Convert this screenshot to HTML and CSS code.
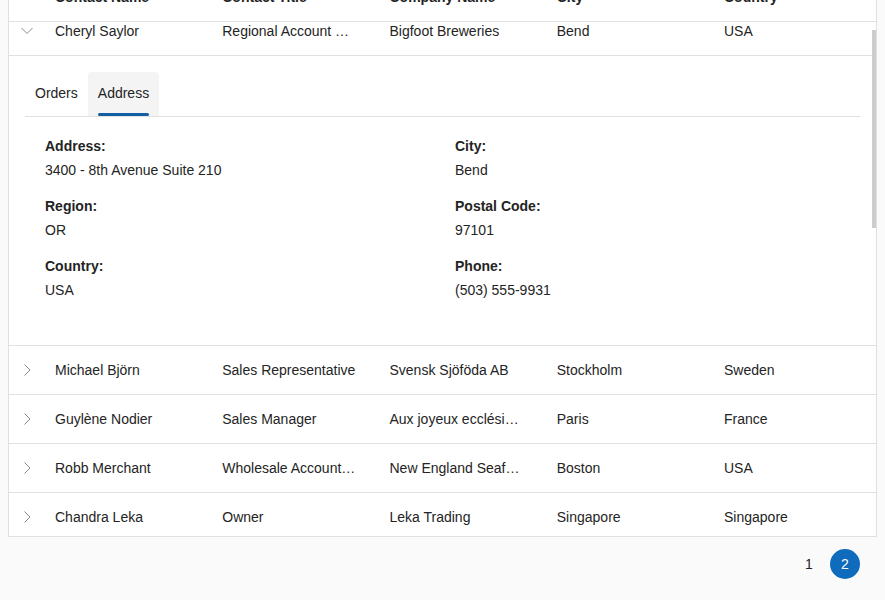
FILE: index.html
```html
<!DOCTYPE html>
<html>
<head>
<meta charset="utf-8">
<link rel="stylesheet" href="styles.css">
</head>
<body>
<div class="grid">
  <div class="header">
    <div class="row head-row">
      <div class="cell expand"></div>
      <div class="cell">Contact Name</div>
      <div class="cell">Contact Title</div>
      <div class="cell">Company Name</div>
      <div class="cell">City</div>
      <div class="cell">Country</div>
    </div>
  </div>
  <div class="body">
    <div class="scroll">
      <div class="row">
        <div class="cell expand"><svg width="12" height="12" viewBox="0 0 12 12"><polyline points="0.5,3 6,8.5 11.5,3" fill="none" stroke="#8a8a8a" stroke-width="1"/></svg></div>
        <div class="cell">Cheryl Saylor</div>
        <div class="cell">Regional Account Representative</div>
        <div class="cell">Bigfoot Breweries</div>
        <div class="cell">Bend</div>
        <div class="cell">USA</div>
      </div>
      <div class="detail">
        <div class="tabs">
          <div class="tab">Orders</div>
          <div class="tab active">Address</div>
        </div>
        <div class="panel">
          <div class="field"><div class="label">Address:</div><div class="value">3400 - 8th Avenue Suite 210</div></div>
          <div class="field"><div class="label">City:</div><div class="value">Bend</div></div>
          <div class="field"><div class="label">Region:</div><div class="value">OR</div></div>
          <div class="field"><div class="label">Postal Code:</div><div class="value">97101</div></div>
          <div class="field"><div class="label">Country:</div><div class="value">USA</div></div>
          <div class="field"><div class="label">Phone:</div><div class="value">(503) 555-9931</div></div>
        </div>
      </div>
      <div class="row">
        <div class="cell expand"><svg width="12" height="12" viewBox="0 0 12 12"><polyline points="3.5,0.5 9,6 3.5,11.5" fill="none" stroke="#8a8a8a" stroke-width="1"/></svg></div>
        <div class="cell">Michael Björn</div>
        <div class="cell">Sales Representative</div>
        <div class="cell">Svensk Sjöföda AB</div>
        <div class="cell">Stockholm</div>
        <div class="cell">Sweden</div>
      </div>
      <div class="row">
        <div class="cell expand"><svg width="12" height="12" viewBox="0 0 12 12"><polyline points="3.5,0.5 9,6 3.5,11.5" fill="none" stroke="#8a8a8a" stroke-width="1"/></svg></div>
        <div class="cell">Guylène Nodier</div>
        <div class="cell">Sales Manager</div>
        <div class="cell">Aux joyeux ecclésiastiques</div>
        <div class="cell">Paris</div>
        <div class="cell">France</div>
      </div>
      <div class="row">
        <div class="cell expand"><svg width="12" height="12" viewBox="0 0 12 12"><polyline points="3.5,0.5 9,6 3.5,11.5" fill="none" stroke="#8a8a8a" stroke-width="1"/></svg></div>
        <div class="cell">Robb Merchant</div>
        <div class="cell">Wholesale Account Agent</div>
        <div class="cell">New England Seafood Cannery</div>
        <div class="cell">Boston</div>
        <div class="cell">USA</div>
      </div>
      <div class="row">
        <div class="cell expand"><svg width="12" height="12" viewBox="0 0 12 12"><polyline points="3.5,0.5 9,6 3.5,11.5" fill="none" stroke="#8a8a8a" stroke-width="1"/></svg></div>
        <div class="cell">Chandra Leka</div>
        <div class="cell">Owner</div>
        <div class="cell">Leka Trading</div>
        <div class="cell">Singapore</div>
        <div class="cell">Singapore</div>
      </div>
    </div>
    <div class="thumb"></div>
  </div>
</div>
<div class="pager">
  <div class="page">1</div>
  <div class="page current">2</div>
</div>
</body>
</html>
```

FILE: styles.css
```css
html, body {
  margin: 0;
  padding: 0;
}
body {
  background: #fafafa;
  font-family: "Liberation Sans", Arial, sans-serif;
  font-size: 14px;
  line-height: 20px;
  color: #242424;
  padding: 0 8px;
  overflow: hidden;
  height: 600px;
}
.grid {
  margin-top: -28px;
  background: #fff;
  border: 1px solid #e0e0e0;
}
.header {
  border-bottom: 1px solid #e0e0e0;
}
.row {
  display: grid;
  grid-template-columns: 30.75px repeat(5, 1fr);
  height: 48px;
  align-items: center;
  border-bottom: 1px solid #e0e0e0;
}
.head-row {
  border-bottom: none;
  font-weight: bold;
}
.cell {
  padding: 0 17px 0 15.25px;
  white-space: nowrap;
  overflow: hidden;
  text-overflow: ellipsis;
  min-width: 0;
}
.cell.expand {
  padding: 0 0 0 5px;
  display: flex;
  justify-content: center;
  align-items: center;
  overflow: visible;
}
.cell.expand svg {
  display: block;
}
.body {
  height: 514px;
  overflow: hidden;
  position: relative;
}
.scroll {
  margin-top: -15px;
}
.thumb {
  position: absolute;
  right: 0;
  top: 8px;
  width: 4px;
  height: 198px;
  background: #cdcdcd;
}
.detail {
  padding: 16px;
  border-bottom: 1px solid #e0e0e0;
}
.tabs {
  display: flex;
  border-bottom: 1px solid #e0e0e0;
}
.tab {
  position: relative;
  height: 44px;
  line-height: 43px;
  padding: 0 10px;
  border-radius: 4px 4px 0 0;
}
.tab.active {
  background: #f4f4f4;
}
.tab.active::after {
  content: "";
  position: absolute;
  left: 10px;
  right: 10px;
  bottom: 0;
  height: 3px;
  border-radius: 2px;
  background: #115ea3;
}
.panel {
  display: grid;
  grid-template-columns: 410px 1fr;
  row-gap: 16px;
  padding: 19px 20px 29px;
}
.label {
  font-weight: bold;
}
.value {
  margin-top: 4px;
}
.pager {
  display: flex;
  justify-content: flex-end;
  gap: 6px;
  padding: 12px 17px 0 0;
}
.page {
  width: 30px;
  height: 30px;
  border-radius: 50%;
  display: flex;
  align-items: center;
  justify-content: center;
  font-size: 14px;
}
.page.current {
  background: #0f6cbd;
  color: #fff;
}
```
